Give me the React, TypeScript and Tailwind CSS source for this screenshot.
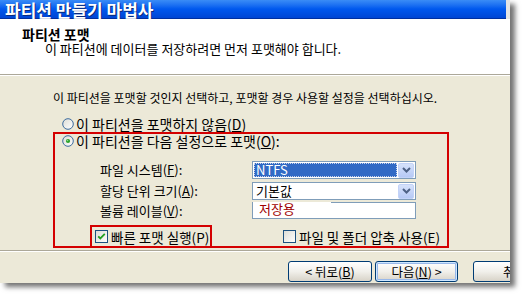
import React from "react";

function Radio({ checked }: { checked?: boolean }) {
  return (
    <svg width="12" height="12" viewBox="0 0 12 12" className="shrink-0">
      <defs>
        <linearGradient id={checked ? "rg1" : "rg0"} x1="0" y1="0" x2="1" y2="1">
          <stop offset="0" stopColor="#dcdcd5" />
          <stop offset="1" stopColor="#ffffff" />
        </linearGradient>
      </defs>
      <circle cx="6" cy="6" r="5.3" fill={`url(#${checked ? "rg1" : "rg0"})`} stroke="#3b6a9e" strokeWidth="1" />
      {checked && <circle cx="6" cy="6" r="2.1" fill="#2aa22a" />}
      {checked && <circle cx="5.5" cy="5.5" r="0.8" fill="#8fd88f" />}
    </svg>
  );
}

function Check({ checked }: { checked?: boolean }) {
  return (
    <svg width="13" height="13" viewBox="0 0 13 13" className="shrink-0">
      <defs>
        <linearGradient id="cbg" x1="0" y1="0" x2="1" y2="1">
          <stop offset="0" stopColor="#dcdcd5" />
          <stop offset="1" stopColor="#ffffff" />
        </linearGradient>
      </defs>
      <rect x="0.5" y="0.5" width="12" height="12" fill="url(#cbg)" stroke="#1c5180" />
      {checked && (
        <path d="M3.2 6.3 L5.3 8.4 L9.8 3.9" fill="none" stroke="#21a121" strokeWidth="1.8" />
      )}
    </svg>
  );
}

function Arrow() {
  return (
    <div className="w-[16px] h-[15px] shrink-0 rounded-[2px] bg-gradient-to-b from-[#d6e2fb] to-[#b6c9f5] border border-[#c3d3f8] flex items-center justify-center">
      <svg width="9" height="6" viewBox="0 0 9 6">
        <path d="M1 1 L4.5 4.5 L8 1" fill="none" stroke="#4d6185" strokeWidth="2" />
      </svg>
    </div>
  );
}

function U({ children }: { children: React.ReactNode }) {
  return <span className="underline underline-offset-[1px]">{children}</span>;
}

function Btn({ children, def, w }: { children: React.ReactNode; def?: boolean; w: string }) {
  return (
    <div
      className={`${w} h-[21px] shrink-0 rounded-[3px] border border-[#003c74] bg-gradient-to-b from-[#ffffff] via-[#f1f0eb] to-[#d8d3c8] flex items-center justify-center text-[12.5px] leading-[14px] text-black whitespace-nowrap ${
        def ? "shadow-[inset_0_0_0_1px_#cee7ff,inset_0_0_0_2px_#98b8ea]" : ""
      }`}
    >
      {children}
    </div>
  );
}

export default function App() {
  return (
    <div className="w-[522px] h-[294px] bg-white overflow-hidden font-['Noto_Sans_CJK_KR','Noto_Sans',sans-serif] text-black">
      <div className="w-[510px] h-[283px] flex flex-col bg-[#ece9d8] overflow-hidden shadow-[5px_4px_5px_rgba(0,0,0,0.55)]">
        {/* title bar */}
        <div className="flex h-[19px] shrink-0">
          <div className="flex-1 bg-gradient-to-b from-[#3a8cf6] via-[#0058ee] to-[#0046d4] border-b border-[#0030a0] flex items-center pl-[5px]">
            <span className="text-white font-bold text-[17px] leading-[17px] [text-shadow:1px_1px_0_#0a2a7a]">
              파티션 만들기 마법사
            </span>
          </div>
          <div className="w-[4px] bg-[#e4e4e4]" />
        </div>
        {/* header */}
        <div className="h-[56px] shrink-0 bg-white border-b border-[#aca899] pl-[22px] pt-[8px]">
          <div className="h-[14px] text-[14px] font-bold leading-[14px]">파티션 포맷</div>
          <div className="pl-[23px] text-[13px] leading-[15px]">
            이 파티션에 데이터를 저장하려면 먼저 포맷해야 합니다.
          </div>
        </div>
        <div className="h-px shrink-0 bg-white" />
        {/* body */}
        <div className="flex-1 flex flex-col text-[12px] leading-[14px]">
          <div className="pl-[53px] pt-[15px] flex flex-col">
            <div className="h-[14px] whitespace-nowrap">
              이 파티션을 포맷할 것인지 선택하고, 포맷할 경우 사용할 설정을 선택하십시오.
            </div>
            <div className="mt-[12px] h-[14px] pl-[9px] flex items-center gap-[2px] whitespace-nowrap text-[14px]">
              <Radio />
              <span>
                이 파티션을 포맷하지 않음(<U>D</U>)
              </span>
            </div>
            <div className="mt-[1px] w-[396px] h-[116px] border-2 border-[#d40000] flex flex-col pl-[7px]">
              <div className="h-[14px] flex items-center gap-[2px] whitespace-nowrap text-[14px]">
                <Radio checked />
                <span>
                  이 파티션을 다음 설정으로 포맷(<U>O</U>):
                </span>
              </div>
              <div className="mt-[13px] h-[18px] flex items-center text-[13px]">
                <div className="w-[190px] pl-[38px] whitespace-nowrap">
                  파일 시스템(<U>F</U>):
                </div>
                <div className="w-[164px] h-[18px] bg-white border border-[#7f9db9] flex items-center p-[1px] gap-[1px]">
                  <div className="flex-1 h-full bg-[#316ac5] border border-dotted border-[#c8d4ea] text-white flex items-center pl-[1px]">
                    NTFS
                  </div>
                  <Arrow />
                </div>
              </div>
              <div className="mt-[3px] h-[18px] flex items-center text-[13px]">
                <div className="w-[190px] pl-[38px] whitespace-nowrap">
                  할당 단위 크기(<U>A</U>):
                </div>
                <div className="w-[164px] h-[18px] bg-white border border-[#7f9db9] flex items-center p-[1px] gap-[1px]">
                  <div className="flex-1 h-full flex items-center pl-[2px]">기본값</div>
                  <Arrow />
                </div>
              </div>
              <div className="mt-[2px] h-[17px] flex items-center text-[13px]">
                <div className="w-[190px] pl-[38px] whitespace-nowrap">
                  볼륨 레이블(<U>V</U>):
                </div>
                <div className="w-[164px] h-[17px] bg-white border-x border-b border-[#7f9db9] flex flex-col">
                  <div className="h-px bg-[linear-gradient(to_right,#ffffff_78px,#7f9db9_78px)]" />
                  <div className="pl-[6px] text-[#a00000] leading-[12px]">저장용</div>
                </div>
              </div>
              <div className="mt-[6px] h-[23px] flex items-center shrink-0 text-[13.5px]">
                <div className="ml-[28px] w-[122px] h-[23px] border-2 border-[#d40000] flex items-center pl-[3px] gap-[3px] whitespace-nowrap overflow-hidden">
                  <Check checked />
                  <span>빠른 포맷 실행(P)</span>
                </div>
                <div className="ml-[71px] flex items-center gap-[3px] whitespace-nowrap">
                  <Check />
                  <span>파일 및 폴더 압축 사용(E)</span>
                </div>
              </div>
            </div>
          </div>
          <div className="mt-[2px] h-px bg-[#aca899] shrink-0" />
          <div className="h-px bg-white shrink-0" />
          <div className="mt-[9px] flex overflow-hidden">
            <div className="ml-[288px]" />
            <Btn w="w-[84px]">
              &lt; 뒤로(<U>B</U>)
            </Btn>
            <div className="w-[3px] shrink-0" />
            <Btn w="w-[83px]" def>
              다음(<U>N</U>) &gt;
            </Btn>
            <div className="w-[15px] shrink-0" />
            <Btn w="w-[83px]">취소</Btn>
          </div>
        </div>
      </div>
    </div>
  );
}
